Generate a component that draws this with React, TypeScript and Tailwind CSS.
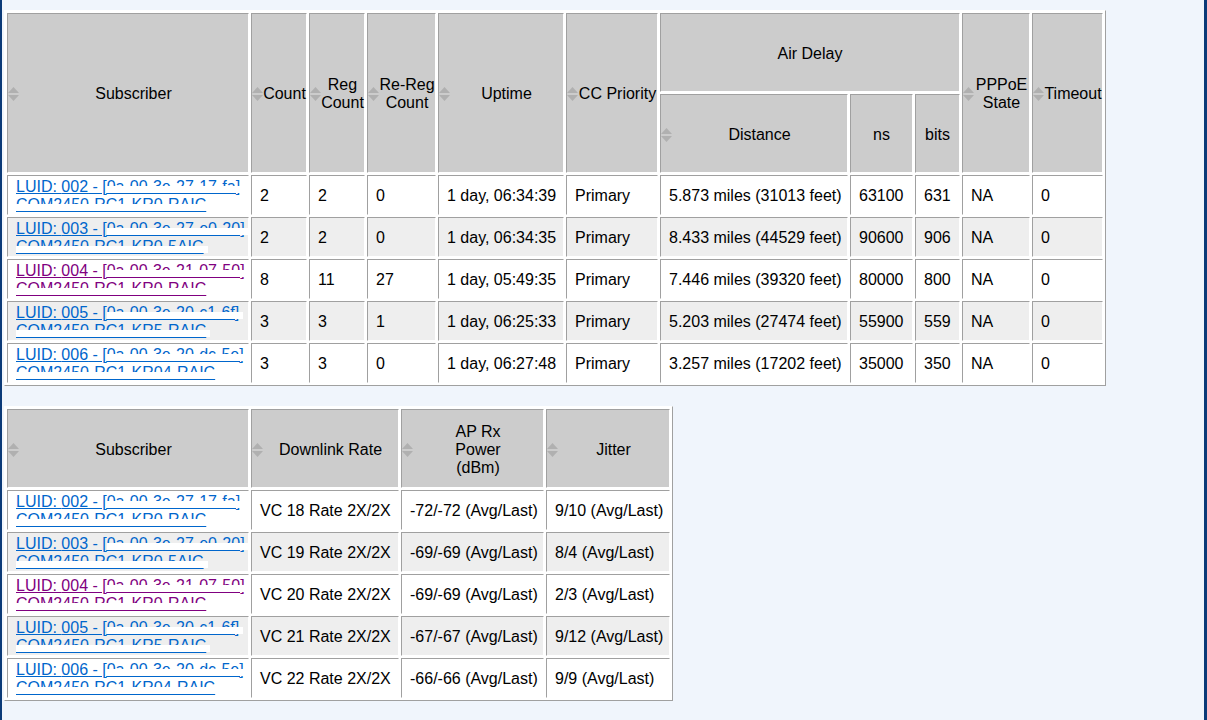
import React from 'react';

type Sub = {
    id: string;
    mac: string;
    name: string;
    visited?: boolean;
};

const subs: Sub[] = [
    { id: '002', mac: '0a-00-3e-27-17-fa]', name: 'COM2450-RC1-KR0-RAIC' },
    { id: '003', mac: '0a-00-3e-27-e0-20]', name: 'COM2450-RC1-KR0-5AIC' },
    { id: '004', mac: '0a-00-3e-21-07-50]', name: 'COM2450-RC1-KR0-RAIC', visited: true },
    { id: '005', mac: '0a-00-3e-20-c1-6f]', name: 'COM2450-RC1-KR5-RAIC' },
    { id: '006', mac: '0a-00-3e-20-dc-5e]', name: 'COM2450-RC1-KR04-RAIC' },
];

const sessions = [
    ['2', '2', '0', '1 day, 06:34:39', 'Primary', '5.873 miles (31013 feet)', '63100', '631', 'NA', '0'],
    ['2', '2', '0', '1 day, 06:34:35', 'Primary', '8.433 miles (44529 feet)', '90600', '906', 'NA', '0'],
    ['8', '11', '27', '1 day, 05:49:35', 'Primary', '7.446 miles (39320 feet)', '80000', '800', 'NA', '0'],
    ['3', '3', '1', '1 day, 06:25:33', 'Primary', '5.203 miles (27474 feet)', '55900', '559', 'NA', '0'],
    ['3', '3', '0', '1 day, 06:27:48', 'Primary', '3.257 miles (17202 feet)', '35000', '350', 'NA', '0'],
];

const links = [
    ['VC 18 Rate 2X/2X', '-72/-72 (Avg/Last)', '9/10 (Avg/Last)'],
    ['VC 19 Rate 2X/2X', '-69/-69 (Avg/Last)', '8/4 (Avg/Last)'],
    ['VC 20 Rate 2X/2X', '-69/-69 (Avg/Last)', '2/3 (Avg/Last)'],
    ['VC 21 Rate 2X/2X', '-67/-67 (Avg/Last)', '9/12 (Avg/Last)'],
    ['VC 22 Rate 2X/2X', '-66/-66 (Avg/Last)', '9/9 (Avg/Last)'],
];

const cellBorder = 'border border-solid border-t-[#a0a0a0] border-l-[#a0a0a0] border-r-white border-b-white';
const tableCls =
    'table-fixed border-separate border-spacing-[2px] border border-solid border-t-white border-l-white border-r-[#a0a0a0] border-b-[#a0a0a0] bg-white';

const SortIcon = () => (
    <svg width="11" height="16" viewBox="0 0 11 16" className="shrink-0">
        <path d="M0 7 L5.5 1 L11 7 Z" fill="#b0b0b0" />
        <path d="M0 9 L11 9 L5.5 15 Z" fill="#b0b0b0" />
    </svg>
);

// header cell, optionally with the sort arrows on its left
const Th: React.FC<{ sort?: boolean; rowSpan?: number; colSpan?: number; children: React.ReactNode }> = ({
    sort = true,
    rowSpan,
    colSpan,
    children,
}) => (
    <th
        rowSpan={rowSpan}
        colSpan={colSpan}
        className={`${cellBorder} bg-[#cccccc] px-0 pt-[2px] pb-0 align-middle font-normal text-black`}
    >
        {sort ? (
            <div className="flex items-center">
                <SortIcon />
                <span className="flex-1 text-center">{children}</span>
            </div>
        ) : (
            <div className="text-center">{children}</div>
        )}
    </th>
);

// redacted text: lower half of the glyphs painted over, underline kept
const Blot: React.FC<{ text: string }> = ({ text }) => (
    <span className="relative">
        {text}
        <span className="absolute left-0 right-[-4px] top-[8px] h-[7px] bg-white"></span>
    </span>
);

const SubscriberLink: React.FC<{ sub: Sub }> = ({ sub }) => (
    <a href="#" className={`whitespace-nowrap underline ${sub.visited ? 'text-[#800080]' : 'text-[#0066cc]'}`}>
        LUID: {sub.id} - [<Blot text={sub.mac} />
        <br />
        <Blot text={sub.name} />
    </a>
);

const Td: React.FC<{ children: React.ReactNode }> = ({ children }) => (
    <td className={`${cellBorder} overflow-hidden px-2 pt-[2px] pb-0 align-middle whitespace-nowrap text-black`}>
        {children}
    </td>
);

export default function App() {
    return (
        <div className="h-[720px] w-full border-l-2 border-r-[3px] border-solid border-[#0b3a78] bg-[#f0f5fc] pl-[2px] pt-[10px] font-['Liberation_Sans',Arial,sans-serif] text-[16px] leading-[18px]">
            {/* Session table */}
            <table className={`${tableCls} w-[1102px]`}>
                <colgroup>
                    <col className="w-[242px]" />
                    <col className="w-[56px]" />
                    <col className="w-[56px]" />
                    <col className="w-[69px]" />
                    <col className="w-[126px]" />
                    <col className="w-[92px]" />
                    <col className="w-[188px]" />
                    <col className="w-[63px]" />
                    <col className="w-[45px]" />
                    <col className="w-[68px]" />
                    <col className="w-[71px]" />
                </colgroup>
                <thead>
                    <tr className="h-[79px]">
                        <Th rowSpan={2}>Subscriber</Th>
                        <Th rowSpan={2}>Count</Th>
                        <Th rowSpan={2}>
                            Reg
                            <br />
                            Count
                        </Th>
                        <Th rowSpan={2}>
                            Re-Reg
                            <br />
                            Count
                        </Th>
                        <Th rowSpan={2}>Uptime</Th>
                        <Th rowSpan={2}>CC Priority</Th>
                        <Th colSpan={3} sort={false}>
                            Air Delay
                        </Th>
                        <Th rowSpan={2}>
                            PPPoE
                            <br />
                            State
                        </Th>
                        <Th rowSpan={2}>Timeout</Th>
                    </tr>
                    <tr className="h-[79px]">
                        <Th>Distance</Th>
                        <Th sort={false}>ns</Th>
                        <Th sort={false}>bits</Th>
                    </tr>
                </thead>
                <tbody>
                    {subs.map((sub, i) => (
                        <tr key={sub.id} className={`h-[40px] ${i % 2 === 1 ? 'bg-[#eeeeee]' : 'bg-white'}`}>
                            <Td>
                                <SubscriberLink sub={sub} />
                            </Td>
                            {sessions[i].map((v, j) => (
                                <Td key={j}>{v}</Td>
                            ))}
                        </tr>
                    ))}
                </tbody>
            </table>

            {/* Link table */}
            <table className={`${tableCls} mt-[20px] w-[669px]`}>
                <colgroup>
                    <col className="w-[242px]" />
                    <col className="w-[148px]" />
                    <col className="w-[143px]" />
                    <col className="w-[124px]" />
                </colgroup>
                <thead>
                    <tr className="h-[79px]">
                        <Th>Subscriber</Th>
                        <Th>Downlink Rate</Th>
                        <Th>
                            AP Rx
                            <br />
                            Power
                            <br />
                            (dBm)
                        </Th>
                        <Th>Jitter</Th>
                    </tr>
                </thead>
                <tbody>
                    {subs.map((sub, i) => (
                        <tr key={sub.id} className={`h-[40px] ${i % 2 === 1 ? 'bg-[#eeeeee]' : 'bg-white'}`}>
                            <Td>
                                <SubscriberLink sub={sub} />
                            </Td>
                            {links[i].map((v, j) => (
                                <Td key={j}>{v}</Td>
                            ))}
                        </tr>
                    ))}
                </tbody>
            </table>
        </div>
    );
}
